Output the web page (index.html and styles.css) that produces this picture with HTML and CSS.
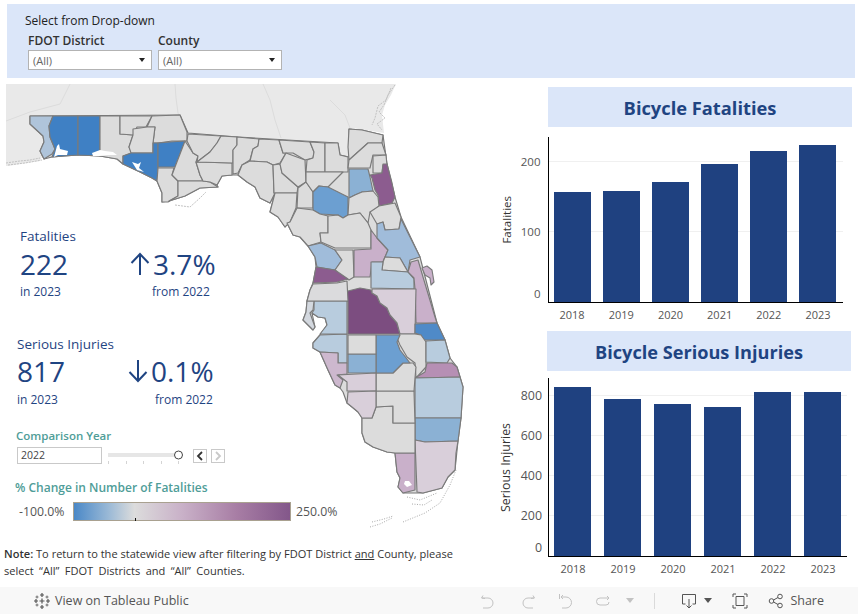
FILE: index.html
```html
<!DOCTYPE html>
<html lang="en">
<head>
<meta charset="utf-8">
<title>Bicycle Fatalities and Serious Injuries</title>
<link rel="stylesheet" href="styles.css">
</head>
<body>
<div class="page">
  <header class="filters">
    <div class="filters-title">Select from Drop-down</div>
    <div class="filters-row">
      <div class="filter">
        <div class="filter-label">FDOT District</div>
        <div class="select"><span>(All)</span><i class="caret"></i></div>
      </div>
      <div class="filter">
        <div class="filter-label">County</div>
        <div class="select"><span>(All)</span><i class="caret"></i></div>
      </div>
    </div>
  </header>

  <main class="body">
    <div class="left">
      <div class="map-wrap">
        <svg class="map" viewBox="6 84 492 460" width="492" height="460" role="img" aria-label="Map of Florida counties">
          <polygon class="land" points="6,84 396,84 391,95 385,105 382,115 384,133 352,128 352,158 300,150 188,140 60,135 45,150 40,161 8,166 6,166"/>
          <g class="trace">
            <polyline points="175,84 176,98 178,113 187,132"/>
            <polyline points="263,84 270,100 275,120 281,138"/>
            <polyline points="6,121 30,112 60,104 70,84"/>
            <polyline points="330,100 345,115 350,128"/>
          </g>
          <g class="shore">
            <polyline points="395,85 388,95 384,105 379,112 385,118 377,124 382,130"/>
            <polyline points="391,88 386,100 378,106 375,118 372,125"/>
            <polyline points="6,163 20,161 30,160 40,158"/>
            <polyline points="8,165 25,163 42,160"/>
            <polyline points="175,205 190,207 200,198 206,192"/>
          </g>
          <polygon class="state" points="30,116 180,115 188,133 238,137 338,143 340,155 349,157 349,129 362,130 383,135 387,164 395,197 401,217 420,257 437,323 445,340 450,358 457,367 463,387 461,418 458,441 455,470 448,477 442,488 423,493 403,493 398,487 400,478 397,472 395,453 387,452 373,447 365,442 362,433 362,418 358,412 352,407 347,403 343,392 340,388 335,385 328,370 320,352 313,348 313,343 320,335 327,325 325,318 318,317 312,313 315,327 313,330 303,320 306,312 307,301 310,290 313,283 316,267 315,257 308,246 300,237 293,235 287,223 285,227 278,217 270,212 275,193 270,203 260,198 255,187 247,182 238,175 232,175 222,176 217,185 218,187 200,188 185,196 169,201 162,202 162,193 157,181 152,178 140,172 123,164 117,159 100,156 78,155 52,157 44,159 40,151 44,142 43,136 30,124"/>
          <g class="counties">
            <polygon class="c-pale-blue2" points="30,116 53,116 49,126 50,137 55,149 52,154 44,159 40,151 44,142 43,136 30,124"/>
            <polygon class="c-blue" points="53,116 78,116 78,155 64,156 52,157 55,149 50,137 49,126"/>
            <polygon class="c-blue" points="78,116 100,116 100,156 78,155"/>
            <polygon class="c-gray" points="100,116 120,116 120,134 133,135 129,147 132,153 123,156 123,164 117,159 100,156"/>
            <polygon class="c-gray" points="120,116 152,116 146,127 137,127 133,135 120,134"/>
            <polygon class="c-gray" points="152,116 180,115 187,132 187,141 172,141 158,143 153,143 155,127 147,127"/>
            <polygon class="c-gray" points="133,129 147,127 155,127 153,143 153,153 131,153 129,147 133,135"/>
            <polygon class="c-blue" points="123,156 131,153 153,153 153,143 158,143 158,168 157,181 152,178 140,172 123,164"/>
            <polygon class="c-blue" points="158,143 170,142 185,141 175,167 158,167"/>
            <polygon class="c-gray" points="158,168 174,168 172,175 178,181 178,196 168,202 162,202 162,193 157,181"/>
            <polygon class="c-gray" points="185,141 193,153 198,156 196,162 200,175 203,181 178,181 172,175 175,167"/>
            <polygon class="c-gray" points="178,181 203,181 210,182 218,187 200,188 185,196 169,201 178,196"/>
            <polygon class="c-gray" points="196,162 232,163 232,175 222,176 217,185 210,182 203,181 200,175"/>
            <polygon class="c-gray" points="188,134 221,136 217,143 210,152 197,162 198,156 193,153 187,141"/>
            <polygon class="c-gray" points="221,136 237,137 237,145 233,150 233,163 197,162 210,152 217,143"/>
            <polygon class="c-gray" points="237,137 259,139 258,146 253,149 250,160 242,165 238,173 233,174 233,150 237,145"/>
            <polygon class="c-gray" points="259,139 279,140 283,153 286,153 280,163 273,165 267,162 250,161 253,149 258,146"/>
            <polygon class="c-gray" points="250,161 267,162 273,165 274,193 275,193 270,203 260,198 255,187 247,182 238,175 242,165"/>
            <polygon class="c-gray" points="273,165 280,164 282,173 298,187 297,193 274,193"/>
            <polygon class="c-gray" points="275,193 297,193 296,208 290,222 285,227 278,217 270,212"/>
            <polygon class="c-gray" points="279,140 310,142 314,152 313,158 305,160 293,153 286,153 283,153"/>
            <polygon class="c-gray" points="286,153 305,160 306,182 298,187 282,173 280,164"/>
            <polygon class="c-gray" points="306,182 313,192 313,208 297,208 298,188"/>
            <polygon class="c-gray" points="310,142 325,143 325,172 306,172 307,160 313,158 314,152"/>
            <polygon class="c-gray" points="325,143 338,143 340,155 348,157 348,172 325,172"/>
            <polygon class="c-gray" points="306,172 325,172 343,172 335,180 328,187 319,186 313,192 306,182"/>
            <polygon class="c-mid-blue2" points="319,186 328,187 348,197 348,215 343,218 338,215 320,214 313,210 313,192"/>
            <polygon class="c-gray" points="349,129 362,130 383,135 382,143 368,143 349,160 348,147"/>
            <polygon class="c-gray" points="368,143 382,143 386,155 373,155 370,168 348,168 349,160"/>
            <polygon class="c-gray" points="373,156 386,155 387,165 383,165 382,173 373,173"/>
            <polygon class="c-mid-blue" points="349,169 368,169 370,177 373,191 362,192 355,195 349,198"/>
            <polygon class="c-purple" points="383,164 387,164 392,183 395,197 392,203 379,206 378,195 375,190 372,178 370,175 382,173"/>
            <polygon class="c-gray" points="349,198 355,195 362,192 373,191 378,197 379,206 373,212 370,212 368,223 360,213 348,215"/>
            <polygon class="c-gray" points="379,206 395,203 401,217 399,229 385,230 383,222 377,224 370,212"/>
            <polygon class="c-gray" points="297,208 313,210 320,214 328,216 328,233 320,233 321,242 308,246 300,237 293,235 287,223 290,222"/>
            <polygon class="c-gray" points="328,216 338,215 343,218 348,215 360,213 368,223 371,230 371,248 335,248 321,242 320,233 328,233"/>
            <polygon class="c-light-blue" points="308,246 321,243 335,250 342,260 335,270 317,267 315,257"/>
            <polygon class="c-gray" points="335,250 353,250 354,277 349,280 340,275 335,270 342,260"/>
            <polygon class="c-lilac" points="354,250 371,249 371,230 377,238 388,250 383,262 372,262 370,277 354,277"/>
            <polygon class="c-light-blue" points="377,224 383,222 385,230 399,229 401,219 420,257 410,260 408,272 400,258 385,257 383,262 388,250 377,238"/>
            <polygon class="c-gray" points="385,257 400,258 408,272 382,270 383,262"/>
            <polygon class="c-pale-blue" points="371,262 383,262 382,270 408,272 414,279 414,289 371,288"/>
            <polygon class="c-lilac" points="411,262 418,260 423,277 435,317 437,323 416,323 415,289 414,278 408,272"/>
            <polygon class="c-lilac" points="422,268 427,266 432,270 434,282 431,285 430,278 425,275"/>
            <polygon class="c-dark" points="345,297 348,291 360,288 371,290 372,293 377,296 380,303 387,308 390,315 397,323 400,334 348,334 348,302"/>
            <polygon class="c-pale-lilac" points="372,289 416,289 415,334 400,334 397,323 390,315 387,308 380,303 377,296 372,293"/>
            <polygon class="c-strong-blue" points="415,324 437,323 445,340 422,340 421,335 415,333"/>
            <polygon class="c-gray" points="400,334 415,334 421,335 426,342 426,367 416,378 415,363 407,357 400,345 397,338"/>
            <polygon class="c-pale-blue" points="426,341 445,340 450,358 447,363 426,362"/>
            <polygon class="c-mauve" points="427,363 452,363 457,367 460,377 415,378 425,372"/>
            <polygon class="c-pale-blue" points="415,378 460,377 463,387 461,418 415,418"/>
            <polygon class="c-mid-blue" points="415,418 461,418 458,441 425,442 415,440"/>
            <polygon class="c-pale-lilac" points="415,440 425,442 458,441 456,453 455,470 448,477 442,488 423,493 417,492"/>
            <polygon class="c-lilac" points="395,453 415,453 415,490 403,493 398,487 400,478 397,472"/>
            <polygon class="c-gray" points="362,418 372,418 376,407 393,406 393,423 415,423 415,453 395,453 387,452 373,447 365,442 362,433"/>
            <polygon class="c-gray" points="376,391 414,391 415,423 393,423 393,406 376,407"/>
            <polygon class="c-gray" points="376,373 393,373 398,368 403,363 413,363 416,367 415,378 414,391 376,391"/>
            <polygon class="c-mid-blue2" points="376,335 400,335 397,342 400,350 410,363 403,363 398,368 393,373 376,373"/>
            <polygon class="c-mid-blue" points="348,354 376,354 376,373 348,373"/>
            <polygon class="c-gray" points="348,335 376,335 376,354 348,354"/>
            <polygon class="c-pale-blue" points="320,335 347,334 347,363 338,363 338,353 320,352 313,348 313,343"/>
            <polygon class="c-pale-blue" points="314,301 347,301 347,334 320,334 327,325 325,318 318,317 312,313 314,310"/>
            <polygon class="c-grayblue" points="307,301 314,301 313,310 310,313 315,327 313,330 303,320 306,312"/>
            <polygon class="c-gray2" points="313,284 337,283 347,281 348,301 307,301 310,290"/>
            <polygon class="c-purple" points="316,267 335,270 348,279 337,282 313,283"/>
            <polygon class="c-lilac2" points="320,352 338,353 338,363 347,363 347,374 337,375 343,380 340,388 335,385 328,370"/>
            <polygon class="c-pale-lilac" points="338,375 376,373 376,391 347,391 347,382"/>
            <polygon class="c-pale-lilac" points="348,392 376,391 376,407 372,418 362,418 358,412 352,407 347,403"/>
          </g>
          <g class="water">
            <polygon points="57,146 59,144 60,149 68,151 67,155 58,155 54,157"/>
            <polygon points="92,153 100,150 105,151 113,152 117,155 108,155 100,156 93,156"/>
            <polygon points="132,162 138,164 141,162 139,168 144,172 137,170"/>
            <polygon points="405,481 409,481 412,485 407,487 404,484"/>
          </g>
          <g class="keys">
            <polyline points="403,522 425,513 440,503 450,485 456,470"/>
            <polyline points="370,527 380,524 392,518"/>
            <polyline points="372,522 384,519 393,516"/>
            <polyline points="407,497 420,500 437,493"/>
            <polyline points="412,504 424,505 432,500"/>
          </g>
        </svg>

        <section class="stat stat-fatal">
          <div class="stat-label">Fatalities</div>
          <div class="stat-value">222</div>
          <div class="stat-delta">
            <svg class="arrow" viewBox="0 0 20 24" width="20" height="24"><path d="M10 23V2M1.5 11 10 2l8.5 9"/></svg>
            <span>3.7%</span>
          </div>
          <div class="stat-sub">in 2023</div>
          <div class="stat-sub stat-from">from 2022</div>
        </section>

        <section class="stat stat-injury">
          <div class="stat-label">Serious Injuries</div>
          <div class="stat-value">817</div>
          <div class="stat-delta">
            <svg class="arrow" viewBox="0 0 20 24" width="20" height="24"><path d="M10 1v21M1.5 13 10 22l8.5-9"/></svg>
            <span>0.1%</span>
          </div>
          <div class="stat-sub">in 2023</div>
          <div class="stat-sub stat-from">from 2022</div>
        </section>

        <section class="compare">
          <div class="teal">Comparison Year</div>
          <div class="compare-row">
            <div class="year-input">2022</div>
            <svg class="slider" viewBox="0 0 76 17" width="76" height="17">
              <rect class="slider-track" x="0" y="6" width="70" height="4"/>
              <path class="slider-ticks" d="M.5 14v3M18.500 14v3M35.500 14v3M53.500 14v3M70.500 14v3"/>
              <circle class="slider-thumb" cx="70.500" cy="8" r="4"/>
            </svg>
            <div class="step"><svg viewBox="0 0 10 10" width="10" height="10"><path d="M7 1 3 5l4 4"/></svg></div>
            <div class="step step-off"><svg viewBox="0 0 10 10" width="10" height="10"><path d="M3 1l4 4-4 4"/></svg></div>
          </div>
        </section>

        <section class="legend">
          <div class="teal">% Change in Number of Fatalities</div>
          <div class="legend-row">
            <span class="legend-min">-100.0%</span>
            <div class="ramp"><i class="ramp-mark"></i></div>
            <span class="legend-max">250.0%</span>
          </div>
        </section>
      </div>
      <p class="note"><b>Note:</b> To return to the statewide view after filtering by FDOT District <u>and</u> County, please<br><span class="note-second">select “All” FDOT Districts and “All” Counties.</span></p>
    </div>

    <div class="right">
      <section class="chart chart-a">
        <h2 class="band">Bicycle Fatalities</h2>
        <div class="chart-row">
          <div class="ytitle">Fatalities</div>
          <div class="plot">
            <span class="ylabel ylabel-zero">0</span>
            <span class="ylabel" style="bottom:70px">100</span>
            <span class="ylabel" style="bottom:140px">200</span>
            <i class="gridline" style="bottom:70px"></i>
            <i class="gridline" style="bottom:140px"></i>
            <div class="bar-cell"><div class="bar" style="height:110px"></div></div>
            <div class="bar-cell"><div class="bar" style="height:111px"></div></div>
            <div class="bar-cell"><div class="bar" style="height:120px"></div></div>
            <div class="bar-cell"><div class="bar" style="height:138px"></div></div>
            <div class="bar-cell"><div class="bar" style="height:151px"></div></div>
            <div class="bar-cell"><div class="bar" style="height:157px"></div></div>
          </div>
        </div>
        <div class="xaxis">
          <span>2018</span><span>2019</span><span>2020</span><span>2021</span><span>2022</span><span>2023</span>
        </div>
      </section>

      <section class="chart chart-b">
        <h2 class="band">Bicycle Serious Injuries</h2>
        <div class="chart-row">
          <div class="ytitle">Serious Injuries</div>
          <div class="plot">
            <span class="ylabel ylabel-zero">0</span>
            <span class="ylabel" style="bottom:40px">200</span>
            <span class="ylabel" style="bottom:80px">400</span>
            <span class="ylabel" style="bottom:120px">600</span>
            <span class="ylabel" style="bottom:160px">800</span>
            <i class="gridline" style="bottom:40px"></i>
            <i class="gridline" style="bottom:80px"></i>
            <i class="gridline" style="bottom:120px"></i>
            <i class="gridline" style="bottom:160px"></i>
            <div class="bar-cell"><div class="bar" style="height:169px"></div></div>
            <div class="bar-cell"><div class="bar" style="height:157px"></div></div>
            <div class="bar-cell"><div class="bar" style="height:152px"></div></div>
            <div class="bar-cell"><div class="bar" style="height:149px"></div></div>
            <div class="bar-cell"><div class="bar" style="height:164px"></div></div>
            <div class="bar-cell"><div class="bar" style="height:164px"></div></div>
          </div>
        </div>
        <div class="xaxis">
          <span>2018</span><span>2019</span><span>2020</span><span>2021</span><span>2022</span><span>2023</span>
        </div>
      </section>
    </div>
  </main>

  <footer class="toolbar">
    <div class="tb-left">
      <svg class="tb-logo" viewBox="0 0 18 18" width="18" height="18">
        <path d="M9 1v4M7 3h4M9 13v4M7 15h4M1 9h4M3 7v4M13 9h4M15 7v4M9 6.500v5M6.500 9h5"/>
        <path class="thin" d="M4 3.500v3M2.500 5h3M14 3.500v3M12.500 5h3M4 11.500v3M2.500 13h3M14 11.500v3M12.500 13h3"/>
      </svg>
      <span>View on Tableau Public</span>
    </div>
    <div class="tb-right">
      <svg class="tb-icon off" viewBox="0 0 16 16" width="16" height="16"><path d="M3 2.500 1.500 5 5 5.500M2 5h6a5 5 0 0 1 0 10H3"/></svg>
      <svg class="tb-icon off m24" viewBox="0 0 16 16" width="16" height="16"><path d="M13 2.500 14.500 5 11 5.500M14 5H8a5 5 0 0 0 0 10h5"/></svg>
      <svg class="tb-icon off m22" viewBox="0 0 16 16" width="16" height="16"><path d="M1.500 1v5M5 2 3 4l2 2M3 4h5a5.500 5.500 0 0 1 0 11H4"/></svg>
      <svg class="tb-icon off m21" viewBox="0 0 16 16" width="16" height="16"><path d="M12 3l2 2-2 2M14 5H5a3.500 3.500 0 0 0 0 7h6a3 3 0 0 0 3-3"/></svg>
      <i class="tb-caret tb-caret-off m15"></i>
      <i class="tb-sep m20"></i>
      <svg class="tb-icon on m26" viewBox="0 0 16 16" width="16" height="16"><path d="M8 15V6M5.500 12.500 8 15l2.500-2.500M4.500 11H1.500V1.500h13V11h-3"/></svg>
      <i class="tb-caret m7"></i>
      <svg class="tb-icon on m20" viewBox="0 0 16 16" width="16" height="16"><path d="M1 4V1h3M12 1h3v3M15 12v3h-3M4 15H1v-3M4 3.500h8v9H4z"/></svg>
      <svg class="tb-icon on m20" viewBox="0 0 16 16" width="16" height="16"><circle cx="3.500" cy="8" r="2.300"/><circle cx="12" cy="3.500" r="2.300"/><circle cx="12" cy="12.500" r="2.300"/><path d="M5.500 7 10 4.500M5.500 9 10 11.500"/></svg>
      <span class="tb-share">Share</span>
    </div>
  </footer>
</div>
</body>
</html>
```
FILE: styles.css
```css
* { box-sizing: border-box; }
html, body { margin: 0; padding: 0; background: #fff; }
body { font-family: "Open Sans", "Noto Sans", sans-serif; color: #333; }
.page { width: 858px; height: 614px; display: flex; flex-direction: column; overflow: hidden; }

/* filter band */
.filters { height: 74px; margin: 4px 3px 6px 7px; padding: 9px 0 0 18px; background: #dbe6f9; flex: none; }
.filters-title { font-size: 12px; line-height: 16px; color: #222; }
.filters-row { display: flex; gap: 6px; margin: 4px 0 0 3px; }
.filter { width: 124px; }
.filter-label { font-size: 12px; font-weight: 600; line-height: 16px; color: #333; }
.select { height: 20px; margin-top: 1px; background: #fff; border: 1px solid #b3b3b3; display: flex; align-items: center; justify-content: space-between; padding: 0 6px 0 4px; font-size: 11px; color: #666; }
.caret { width: 0; height: 0; border: 3.500px solid transparent; border-top: 4px solid #222; border-bottom: 0; }

/* body */
.body { flex: 1; display: flex; min-height: 0; }
.left { width: 498px; flex: none; }
.right { flex: 1; min-width: 0; }
.map-wrap { position: relative; height: 460px; }
.map { display: block; margin-left: 6px; }
.land { fill: #e9e9e9; }
.state { fill: #dcdcdc; stroke: #777; stroke-width: 1.150; stroke-linejoin: round; }
.trace polyline { fill: none; stroke: #dcdcdc; stroke-width: 1; }
.shore polyline { fill: none; stroke: #c2c2c2; stroke-width: 1; stroke-dasharray: 2 1; }
.counties polygon { stroke: #7a7a7a; stroke-width: 1.150; stroke-linejoin: round; }
.water polygon { fill: #fff; stroke: none; }
.keys polyline { fill: none; stroke: #a8a8a8; stroke-width: 1; stroke-dasharray: 1 1.500; }
.c-gray { fill: #dcdcdc; }
.c-gray2 { fill: #dbdbdd; }
.c-grayblue { fill: #d3d8df; }
.c-blue { fill: #3f80c4; }
.c-strong-blue { fill: #4f8ac8; }
.c-mid-blue2 { fill: #6c9fd1; }
.c-mid-blue { fill: #8bb1d4; }
.c-light-blue { fill: #a0bcda; }
.c-pale-blue { fill: #b8ccde; }
.c-pale-blue2 { fill: #afc4da; }
.c-pale-lilac { fill: #d9cfda; }
.c-lilac { fill: #c9b0ca; }
.c-lilac2 { fill: #cdb8ce; }
.c-mauve { fill: #b68fb4; }
.c-purple { fill: #8c5c8f; }
.c-dark { fill: #7c4d80; }

/* KPI blocks */
.stat { position: absolute; display: grid; grid-template-columns: 110px auto; color: #1f4482; }
.stat-fatal { left: 20px; top: 143px; }
.stat-injury { left: 17px; top: 251px; grid-template-columns: 111px auto; }
.stat-label { grid-column: 1 / -1; font-size: 13.500px; line-height: 18px; }
.stat-value { font-size: 28px; line-height: 38px; }
.stat-delta { display: flex; align-items: center; gap: 3px; font-size: 28px; line-height: 38px; }
.stat-sub { font-size: 12px; line-height: 16px; margin-top: 1px; }
.stat-injury .stat-value, .stat-injury .stat-delta { margin-top: -1px; }
.stat-injury .stat-sub { margin-top: 2px; }
.stat-fatal .stat-from { padding-left: 22px; }
.stat-injury .stat-from { padding-left: 27px; }
.arrow { fill: none; stroke: #1f4482; stroke-width: 2; flex: none; }

/* controls */
.teal { font-size: 11.500px; font-weight: 600; line-height: 16px; color: #4f9d98; }
.legend .teal { font-size: 12px; }
.compare { position: absolute; left: 16px; top: 344px; }
.compare-row { display: flex; align-items: center; margin: 3px 0 0 1px; }
.year-input { width: 85px; height: 17px; border: 1px solid #c9c9c9; padding-left: 3px; font-size: 10.500px; line-height: 15px; color: #444; }
.slider { margin-left: 6px; flex: none; }
.slider-track { fill: #e6e6e6; }
.slider-ticks { stroke: #d4d4d4; stroke-width: 1; }
.slider-thumb { fill: #fff; stroke: #444; stroke-width: 1; }
.step { width: 14px; height: 14px; margin-left: 9px; border: 1px solid #c9c9c9; display: flex; align-items: center; justify-content: center; }
.step + .step { margin-left: 4px; }
.step svg { fill: none; stroke: #333; stroke-width: 1.800; }
.step-off svg { stroke: #c9c9c9; }
.legend { position: absolute; left: 15px; top: 396px; }
.legend-row { display: flex; align-items: center; margin-top: 6px; padding-left: 4px; font-size: 12.300px; color: #555; }
.legend-min { width: 54px; }
.legend-max { margin-left: 5px; }
.ramp { position: relative; width: 218px; height: 19px; border: 1px solid #a9a190; background: linear-gradient(to right, #4a88c7 0%, #9ab9d6 16%, #dcdcdc 28%, #c9b1c8 50%, #a87ea5 75%, #83578a 100%); }
.ramp-mark { position: absolute; left: 61px; bottom: -1px; width: 1px; height: 3px; background: #111; }

.note { margin: 1px 0 0 4px; font-size: 11.050px; line-height: 17px; color: #333; white-space: nowrap; }
.note b { font-weight: 600; }
.note-second { word-spacing: 2.500px; }

/* charts */
.chart-a { margin-top: 3px; --pw: 295px; --ph: 166px; --pitch: 49.200px; --axis: 49.500px; }
.chart-b { margin-top: 4px; --pw: 299px; --ph: 179px; --pitch: 50px; --axis: 50px; }
.band { margin: 0 6px 0 50px; height: 40px; background: #dbe6f9; font-size: 18.300px; font-weight: 700; line-height: 42px; text-align: center; color: #1f4482; }
.chart-b .band { margin-left: 49px; margin-right: 7px; font-size: 18.150px; }
.chart-row { display: flex; margin-top: 10px; }
.chart-b .chart-row { margin-top: 7px; }
.ytitle { writing-mode: vertical-rl; transform: rotate(180deg); width: 14px; margin-left: 2px; align-self: center; font-size: 11.500px; line-height: 14px; text-align: center; color: #333; }
.chart-a .ytitle { margin-right: 33.500px; }
.chart-b .ytitle { margin-right: 35px; margin-left: 1px; font-size: 12.400px; }
.plot { position: relative; width: var(--pw); height: var(--ph); border-left: 1px solid #000; border-bottom: 1px solid #000; display: grid; grid-template-columns: repeat(6, var(--pitch)); }
.bar-cell { position: relative; display: flex; align-items: flex-end; padding-left: 5px; }
.bar { width: 37px; background: #1f4180; }
.gridline { position: absolute; left: 0; right: 0; height: 1px; background: #f0f0f0; }
.ylabel { position: absolute; right: calc(100% + 8px); font-size: 11.500px; line-height: 16px; color: #555; transform: translateY(50%); }
.chart-b .ylabel { font-size: 12.400px; right: calc(100% + 7px); }
.ylabel-zero { bottom: 0; transform: none; }
.xaxis { display: grid; grid-template-columns: repeat(6, var(--pitch)); margin-left: var(--axis); height: 24px; font-size: 11px; line-height: 24px; color: #555; text-align: center; }

/* toolbar */
.toolbar { height: 27px; flex: none; background: #f8f8f8; display: flex; align-items: center; justify-content: space-between; padding: 0 33px; font-size: 12.500px; color: #555; }
.tb-left { display: flex; align-items: center; gap: 4px; }
.tb-logo { fill: none; stroke: #555; stroke-width: 1.200; }
.tb-logo .thin { stroke-width: .8; }
.tb-right { display: flex; align-items: center; margin-right: 1px; }
.tb-icon { fill: none; stroke-width: 1; flex: none; }
.off { stroke: #c2c2c2; }
.on { stroke: #555; }
.tb-caret { width: 0; height: 0; border: 4px solid transparent; border-top: 5px solid #555; border-bottom: 0; }
.tb-caret-off { border-top-color: #c2c2c2; }
.tb-sep { width: 1px; height: 16px; background: #dadada; }
.tb-share { margin-left: 6px; }
.m7 { margin-left: 7px; }
.m15 { margin-left: 15px; }
.m20 { margin-left: 20px; }
.m21 { margin-left: 21px; }
.m22 { margin-left: 22px; }
.m24 { margin-left: 24px; }
.m26 { margin-left: 26px; }
```
